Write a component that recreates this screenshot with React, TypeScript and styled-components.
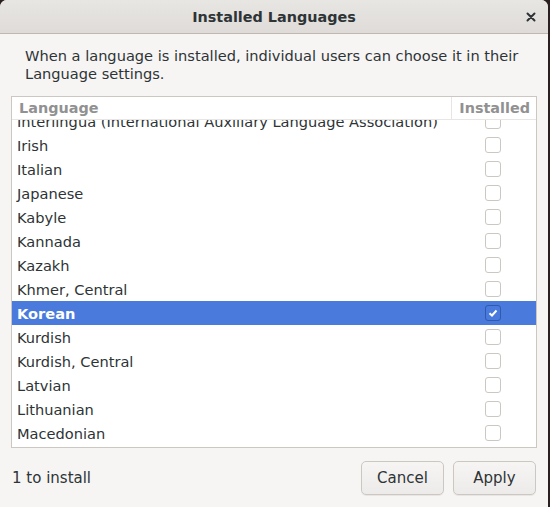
import styled, { createGlobalStyle } from "styled-components";

const GlobalStyle = createGlobalStyle`
  html, body {
    margin: 0;
    padding: 0;
    background: #2b2020;
  }
  body {
    font-family: "DejaVu Sans", "Liberation Sans", sans-serif;
    color: #2e3436;
  }
`;

const Window = styled.div`
  width: 548px;
  height: 507px;
  display: flex;
  flex-direction: column;
  background: #f6f5f4;
  border-radius: 7px 7px 0 0;
  overflow: hidden;
`;

const TitleBar = styled.div`
  height: 33px;
  flex: none;
  display: grid;
  grid-template-columns: 40px 1fr 40px;
  align-items: center;
  background: linear-gradient(#e8e6e3, #dedbd8);
  border-bottom: 1px solid #bfb8b1;
`;

const Title = styled.div`
  grid-column: 2;
  text-align: center;
  font-weight: bold;
  font-size: 14.4px;
  color: #2e3436;
`;

const Close = styled.div`
  display: flex;
  justify-content: center;
  padding-left: 6px;
  color: #2e3436;
`;

const Content = styled.div`
  flex: 1;
  display: flex;
  flex-direction: column;
  padding: 13px 11px 0 11px;
`;

const Description = styled.p`
  margin: 0 0 0 14px;
  font-size: 14.6px;
  line-height: 18px;
  color: #2e3436;
`;

const TreeBox = styled.div`
  margin-top: 13px;
  height: 350px;
  border: 1px solid #cdc7c2;
  background: #ffffff;
  display: flex;
  flex-direction: column;
  overflow: hidden;
`;

const HeaderRow = styled.div`
  display: flex;
  height: 22px;
  flex: none;
  border-bottom: 1px solid #e8e5e2;
  background: #ffffff;
  font-weight: bold;
  font-size: 14.4px;
  color: #919191;
`;

const HeaderCell = styled.div<{ $grow?: boolean }>`
  display: flex;
  align-items: center;
  ${(p) =>
    p.$grow
      ? "flex: 1; padding-left: 7px;"
      : "width: 78px; justify-content: flex-end; padding-right: 6px; border-left: 1px solid #e8e5e2;"}
`;

const Viewport = styled.div`
  flex: 1;
  overflow: hidden;
`;

const List = styled.div`
  margin-top: -11px;
`;

const Row = styled.div<{ $selected?: boolean }>`
  display: flex;
  align-items: center;
  height: 24px;
  font-size: 14.6px;
  background: ${(p) => (p.$selected ? "#4a7bdc" : "transparent")};
  color: ${(p) => (p.$selected ? "#ffffff" : "#2e3436")};
  font-weight: ${(p) => (p.$selected ? "bold" : "normal")};
`;

const Name = styled.div`
  flex: 1;
  min-width: 0;
  padding-left: 5px;
  white-space: nowrap;
  overflow: hidden;
`;

const CheckCell = styled.div`
  width: 51px;
  flex: none;
  display: flex;
`;

const Check = styled.div<{ $checked?: boolean }>`
  width: 14px;
  height: 14px;
  border-radius: 3px;
  border: 1px solid ${(p) => (p.$checked ? "#2f5ab0" : "#cdc7c2")};
  background: ${(p) => (p.$checked ? "#4a7bdc" : "#ffffff")};
  display: flex;
  align-items: center;
  justify-content: center;
`;

const Footer = styled.div`
  display: flex;
  align-items: center;
  padding: 13px 12px 12px 12px;
  gap: 9px;
`;

const Status = styled.div`
  flex: 1;
  font-size: 15px;
  color: #2e3436;
`;

const Button = styled.button`
  width: 83px;
  height: 34px;
  border: 1px solid #cdc7c2;
  border-radius: 5px;
  background: linear-gradient(#f6f5f4, #edebe9);
  box-shadow: 0 1px 0 rgba(0, 0, 0, 0.06);
  font-family: "DejaVu Sans", "Liberation Sans", sans-serif;
  font-size: 15px;
  color: #2e3436;
  padding: 0;
`;

const languages = [
  "Interlingua (International Auxiliary Language Association)",
  "Irish",
  "Italian",
  "Japanese",
  "Kabyle",
  "Kannada",
  "Kazakh",
  "Khmer, Central",
  "Korean",
  "Kurdish",
  "Kurdish, Central",
  "Latvian",
  "Lithuanian",
  "Macedonian",
  "Malay",
];

const App = () => {
  return (
    <>
      <GlobalStyle />
      <Window>
        <TitleBar>
          <Title>Installed Languages</Title>
          <Close>
            <svg width="10" height="10" viewBox="0 0 10 10">
              <path
                d="M1.5 1.5 L8.5 8.5 M8.5 1.5 L1.5 8.5"
                stroke="#2e3436"
                strokeWidth="2"
                strokeLinecap="round"
              />
            </svg>
          </Close>
        </TitleBar>
        <Content>
          <Description>
            When a language is installed, individual users can choose it in
            their Language settings.
          </Description>
          <TreeBox>
            <HeaderRow>
              <HeaderCell $grow>Language</HeaderCell>
              <HeaderCell>Installed</HeaderCell>
            </HeaderRow>
            <Viewport>
              <List>
                {languages.map((l) => {
                  const sel = l === "Korean";
                  return (
                    <Row key={l} $selected={sel}>
                      <Name>{l}</Name>
                      <CheckCell>
                        <Check $checked={sel}>
                          {sel && (
                            <svg width="10" height="10" viewBox="0 0 10 10">
                              <path
                                d="M1.5 5.2 L4 7.5 L8.5 2.5"
                                stroke="#ffffff"
                                strokeWidth="2"
                                fill="none"
                              />
                            </svg>
                          )}
                        </Check>
                      </CheckCell>
                    </Row>
                  );
                })}
              </List>
            </Viewport>
          </TreeBox>
        </Content>
        <Footer>
          <Status>1 to install</Status>
          <Button>Cancel</Button>
          <Button>Apply</Button>
        </Footer>
      </Window>
    </>
  );
};

export default App;
